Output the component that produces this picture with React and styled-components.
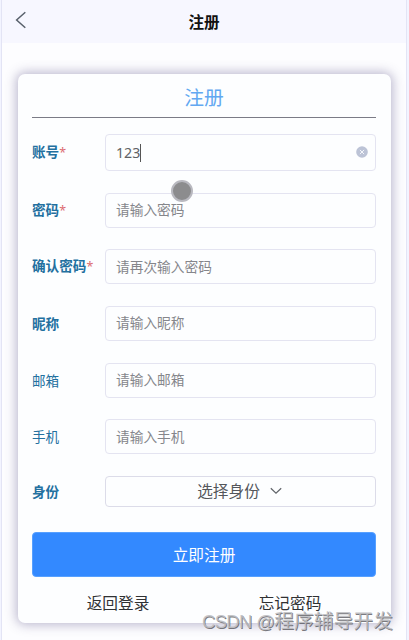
import React, { useState } from "react";
import styled, { createGlobalStyle } from "styled-components";

const staticFields = [
  { name: "account", label: "账号", required: true, bold: true },
  { name: "password", label: "密码", required: true, bold: true, hint: "请输入密码" },
  { name: "confirm", label: "确认密码", required: true, bold: true, hint: "请再次输入密码" },
  { name: "nickname", label: "昵称", bold: true, hint: "请输入昵称" },
  { name: "email", label: "邮箱", hint: "请输入邮箱" },
  { name: "phone", label: "手机", hint: "请输入手机" },
];

const App = () => {
  const [values, setValues] = useState({ account: "123" });
  const update = (name, value) => setValues(prev => ({ ...prev, [name]: value }));

  return (
    <>
      <GlobalStyle />
      <Phone>
        <Header>
          <BackButton>
            <svg width="12" height="18" viewBox="0 0 12 18" fill="none">
              <path d="M10.3 1.2 1.6 9l8.7 7.8" stroke="#58606b" strokeWidth="1.5" />
            </svg>
          </BackButton>
          <HeaderTitle>注册</HeaderTitle>
        </Header>
        <Card>
          <CardTitle>注册</CardTitle>
          {staticFields.map(field => (
            <Row key={field.name}>
              <Label $bold={field.bold}>
                {field.label}
                {field.required && <Required>*</Required>}
              </Label>
              <Field $active={field.name === "account"}>
                {field.name === "account" ? (
                  <>
                    <Value>{values.account}</Value>
                    {values.account && (
                      <ClearButton onClick={() => update("account", "")}>
                        <svg width="12" height="12" viewBox="0 0 12 12">
                          <circle cx="6" cy="6" r="5.8" fill="#bcc3d6" />
                          <path d="m3.9 3.9 4.2 4.2m0-4.2L3.9 8.1" stroke="#f4f6fb" strokeWidth="1" />
                        </svg>
                      </ClearButton>
                    )}
                  </>
                ) : (
                  <Input
                    placeholder={field.hint}
                    value={values[field.name] || ""}
                    onChange={e => update(field.name, e.target.value)}
                  />
                )}
              </Field>
            </Row>
          ))}
          <Row>
            <Label $bold>身份</Label>
            <Select>
              选择身份
              <svg width="12" height="8" viewBox="0 0 12 8" fill="none">
                <path d="m.8 1.2 5.2 5 5.2-5" stroke="#606469" strokeWidth="1.2" />
              </svg>
            </Select>
          </Row>
          <Submit>立即注册</Submit>
          <Links>
            <Link>返回登录</Link>
            <Link>忘记密码</Link>
          </Links>
        </Card>
        <Touch />
        <Watermark>
          <Latin>CSDN @</Latin>程序辅导开发
        </Watermark>
      </Phone>
    </>
  );
};

const GlobalStyle = createGlobalStyle`
  * {
    box-sizing: border-box;
  }

  body {
    margin: 0;
    background: #f3f4ff;
    font-family: "Noto Sans CJK SC", sans-serif;
    overflow: hidden;
  }

  button, input {
    font-family: inherit;
  }
`;

const Phone = styled.div`
  position: relative;
  height: 640px;
  margin: 0 2px 0 1px;
  border: solid #e3e4f5;
  border-width: 0 1px;
  background: #fdfdff;
  overflow: hidden;
`;

const Header = styled.div`
  display: grid;
  grid-template-columns: 40px 1fr 40px;
  align-items: center;
  height: 43px;
  background: #f7f7ff;
`;

const BackButton = styled.button`
  display: flex;
  padding: 0 0 3px 12.5px;
  border: 0;
  background: none;
`;

const HeaderTitle = styled.div`
  padding-bottom: 1px;
  color: #111;
  font-size: 15.6px;
  font-weight: 700;
  line-height: 24px;
  text-align: center;
`;

const Card = styled.div`
  height: 549px;
  margin: 31px 15.5px 0 15.5px;
  padding: 0 14.5px;
  border-radius: 7px;
  background: #fdfeff;
  box-shadow: 0 0 11px 2px rgba(65, 55, 115, 0.34);
`;

const CardTitle = styled.div`
  height: 44px;
  margin-bottom: 16px;
  border-bottom: 1px solid #7b7b86;
  color: #62a8f1;
  font-size: 19.8px;
  line-height: 46px;
  text-align: center;
`;

const Row = styled.div`
  display: flex;
  align-items: center;
  margin-bottom: 21.5px;
`;

const Label = styled.div`
  flex: 0 0 73px;
  padding-bottom: 1px;
  color: #23709f;
  font-size: 13.6px;
  font-weight: ${props => (props.$bold ? 700 : 400)};
  line-height: 20px;
  white-space: nowrap;
`;

const Required = styled.span`
  color: #dc6d72;
  font-family: "Noto Sans", sans-serif;
  font-size: 12.5px;
  font-weight: 400;
`;

const Field = styled.div`
  display: flex;
  flex: 1;
  align-items: center;
  justify-content: space-between;
  height: ${props => (props.$active ? "37px" : "35.2px")};
  padding: 0 7px 0 10px;
  border: 1px solid #e4e4f1;
  border-radius: 4px;
`;

const Value = styled.span`
  border-right: 1px solid #555;
  color: #606266;
  font-family: "Noto Sans", sans-serif;
  font-size: 14.2px;
  line-height: 18px;
`;

const ClearButton = styled.button`
  display: flex;
  padding: 0 0 2px;
  border: 0;
  background: none;
`;

const Input = styled.input`
  width: 100%;
  padding: 0 0 2px;
  border: 0;
  outline: 0;
  background: none;
  color: #606266;
  font-size: 13.7px;
  line-height: 20px;

  &::placeholder {
    color: #85868b;
    opacity: 1;
  }
`;

const Select = styled.button`
  display: flex;
  flex: 1;
  gap: 10px;
  align-items: center;
  justify-content: center;
  height: 31px;
  padding: 0 2px 0 0;
  border: 1px solid #dcdce9;
  border-radius: 4px;
  background: none;
  color: #54565b;
  font-size: 15.7px;
  line-height: 24px;
`;

const Submit = styled.button`
  width: 100%;
  height: 45px;
  margin-top: 3.5px;
  border: 1px solid #57a0ff;
  border-radius: 4px;
  background: #3389ff;
  color: #fff;
  font-size: 15.7px;
`;

const Links = styled.div`
  display: flex;
  padding-top: 14px;
`;

const Link = styled.a`
  flex: 1;
  color: #303133;
  font-size: 15.7px;
  line-height: 24px;
  text-align: center;
`;

const Touch = styled.div`
  position: absolute;
  top: 180px;
  left: 169px;
  width: 22px;
  height: 22px;
  border: 2px solid #b9b9c0;
  border-radius: 50%;
  background: #8c8c8e;
`;

const Watermark = styled.div`
  position: absolute;
  right: 13px;
  bottom: 4px;
  color: rgba(190, 190, 194, 0.9);
  font-size: 19.8px;
  line-height: 28px;
  white-space: nowrap;
  text-shadow: 0.7px 0.7px 0 rgba(80, 80, 85, 0.75);
`;

const Latin = styled.span`
  font-family: "Liberation Sans", sans-serif;
  font-size: 18.4px;
  letter-spacing: -0.6px;
`;

export default App;
